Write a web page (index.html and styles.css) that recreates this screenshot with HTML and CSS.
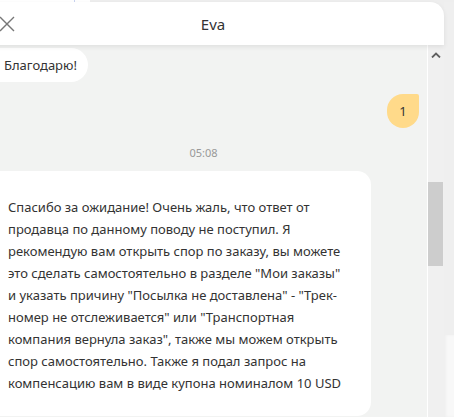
FILE: index.html
```html
<!DOCTYPE html>
<html lang="ru">
<head>
<meta charset="utf-8">
<title>Eva</title>
<link rel="stylesheet" href="styles.css">
</head>
<body>
<div class="topstrip">
  <div class="ts-white"><span class="ts-mark"></span></div>
</div>
<div class="main">
  <div class="panel">
    <header class="head">
      <svg class="close" width="16" height="16" viewBox="0 0 16 16" aria-hidden="true">
        <path d="M1 1 L15 15 M15 1 L1 15" stroke="#777" stroke-width="1.4" fill="none"/>
      </svg>
      <div class="title">Eva</div>
      <div></div>
    </header>
    <div class="body">
      <div class="messages">
        <div class="row left"><div class="bubble pill">Благодарю!</div></div>
        <div class="row right"><div class="bubble mine">1</div></div>
        <div class="time">05:08</div>
        <div class="row left">
          <div class="bubble big">Спасибо за ожидание! Очень жаль, что ответ от<br>продавца по данному поводу не поступил. Я<br>рекомендую вам открыть спор по заказу, вы можете<br>это сделать самостоятельно в разделе "Мои заказы"<br>и указать причину "Посылка не доставлена" - "Трек-<br>номер не отслеживается" или "Транспортная<br>компания вернула заказ", также мы можем открыть<br>спор самостоятельно. Также я подал запрос на<br>компенсацию вам в виде купона номиналом 10 USD</div>
        </div>
      </div>
      <div class="scroll">
        <svg class="arrow" width="10" height="6" viewBox="0 0 10 6" aria-hidden="true">
          <path d="M1 5.5 L5 1.5 L9 5.5" stroke="#606060" stroke-width="1.8" fill="none"/>
        </svg>
        <div class="thumb"></div>
      </div>
    </div>
  </div>
  <div class="side">
    <div class="side-top"></div>
    <div class="side-bottom"></div>
  </div>
</div>
</body>
</html>
```
FILE: styles.css
```css
* { box-sizing: border-box; }
html, body {
  margin: 0;
  padding: 0;
  width: 454px;
  height: 417px;
  overflow: hidden;
  background: #eeeeee;
  font-family: "Noto Sans", "Open Sans", sans-serif;
  color: #333;
}
.topstrip {
  height: 2px;
  display: flex;
}
.ts-white {
  width: 90px;
  background: #fff;
  position: relative;
}
.ts-mark {
  position: absolute;
  left: 74px;
  top: 0;
  width: 1px;
  height: 2px;
  background: #c9d3f0;
}
.main {
  display: flex;
  height: 415px;
}
.panel {
  width: 464px;
  margin-left: -20px;
  display: flex;
  flex-direction: column;
  flex: none;
}
.head {
  height: 43px;
  background: #fff;
  border-top-right-radius: 14px;
  display: grid;
  grid-template-columns: 1fr auto 1fr;
  align-items: center;
  padding: 0 19px;
  position: relative;
  z-index: 2;
  box-shadow: 0 2px 5px rgba(0,0,0,0.08);
}
.close { display: block; }
.title {
  font-size: 15px;
  padding-left: 2px;
}
.body {
  flex: 1;
  display: flex;
  min-height: 0;
}
.messages {
  width: 448px;
  background: #f2f3f2;
  border-right: 1px solid #fff;
  overflow: hidden;
  padding-top: 3px;
  font-size: 13px;
}
.row { display: flex; }
.row.right { justify-content: flex-end; padding-right: 8px; margin-top: 12px; }
.bubble { background: #fff; }
.pill {
  height: 34px;
  line-height: 34px;
  padding: 0 11px 0 24px;
  border-radius: 17px;
}
.mine {
  width: 32px;
  height: 34px;
  background: #ffda8a;
  border-radius: 16px 2px 16px 16px;
  display: flex;
  align-items: center;
  justify-content: center;
}
.time {
  text-align: center;
  font-size: 11px;
  line-height: 16px;
  color: #999;
  margin-top: 17px;
  margin-bottom: 10px;
}
.big {
  width: 391px;
  padding: 25px 10px 22px 28px;
  line-height: 22px;
  white-space: nowrap;
  border-radius: 0 14px 14px 0;
}
.scroll {
  width: 16px;
  background: #f0f0f0;
  position: relative;
}
.arrow {
  position: absolute;
  left: 3px;
  top: 7px;
}
.thumb {
  position: absolute;
  left: 0;
  top: 137px;
  width: 15px;
  height: 84px;
  background: #cdcdcd;
}
.side {
  flex: 1;
  display: flex;
  flex-direction: column;
}
.side-top {
  height: 333px;
  background: #efefef;
}
.side-bottom {
  flex: 1;
  background: #f8f8f8;
  box-shadow: inset 2px 0 3px rgba(0,0,0,0.04);
}
```
